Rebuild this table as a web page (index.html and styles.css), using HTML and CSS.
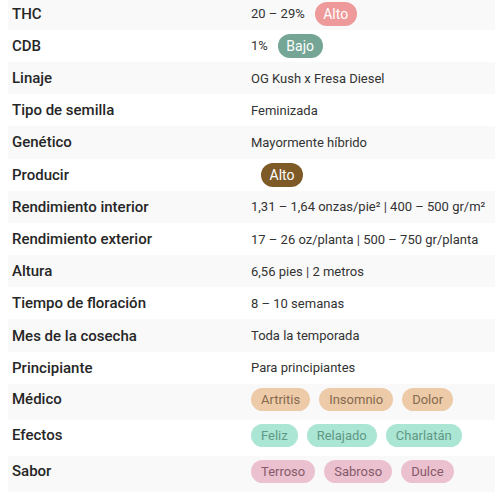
FILE: index.html
```html
<!DOCTYPE html>
<html lang="es">
<head>
<meta charset="utf-8">
<link rel="stylesheet" href="styles.css">
</head>
<body>
<div class="specs">
  <div class="row"><div class="label">THC</div><div class="value">20 – 29% <span class="badge pink">Alto</span></div></div>
  <div class="row"><div class="label">CDB</div><div class="value">1% <span class="badge green">Bajo</span></div></div>
  <div class="row"><div class="label">Linaje</div><div class="value">OG Kush x Fresa Diesel</div></div>
  <div class="row"><div class="label">Tipo de semilla</div><div class="value">Feminizada</div></div>
  <div class="row"><div class="label">Genético</div><div class="value">Mayormente híbrido</div></div>
  <div class="row"><div class="label">Producir</div><div class="value"><span class="badge brown solo">Alto</span></div></div>
  <div class="row"><div class="label">Rendimiento interior</div><div class="value">1,31 – 1,64 onzas/pie² | 400 – 500 gr/m²</div></div>
  <div class="row"><div class="label">Rendimiento exterior</div><div class="value">17 – 26 oz/planta | 500 – 750 gr/planta</div></div>
  <div class="row"><div class="label">Altura</div><div class="value">6,56 pies | 2 metros</div></div>
  <div class="row"><div class="label">Tiempo de floración</div><div class="value">8 – 10 semanas</div></div>
  <div class="row"><div class="label">Mes de la cosecha</div><div class="value">Toda la temporada</div></div>
  <div class="row"><div class="label">Principiante</div><div class="value">Para principiantes</div></div>
  <div class="row tags-row"><div class="label">Médico</div><div class="value tags"><span class="tag peach">Artritis</span><span class="tag peach">Insomnio</span><span class="tag peach">Dolor</span></div></div>
  <div class="row tags-row"><div class="label">Efectos</div><div class="value tags"><span class="tag mint">Feliz</span><span class="tag mint">Relajado</span><span class="tag mint">Charlatán</span></div></div>
  <div class="row tags-row"><div class="label">Sabor</div><div class="value tags"><span class="tag rose">Terroso</span><span class="tag rose">Sabroso</span><span class="tag rose">Dulce</span></div></div>
</div>
</body>
</html>
```
FILE: styles.css
```css
html, body {
  margin: 0;
  padding: 0;
  background: #ffffff;
}
body {
  padding-left: 8px;
  font-family: Roboto, "Liberation Sans", sans-serif;
  overflow: hidden;
}
.specs {
  margin-top: -2.4px;
  display: flex;
  flex-direction: column;
}
.row {
  display: grid;
  grid-template-columns: 239px 1fr;
  height: 32.2px;
  box-sizing: border-box;
  align-items: center;
}
.row:nth-child(odd) {
  background: #f9f9f9;
}
.label {
  padding-left: 4px;
  font-size: 15px;
  font-weight: 500;
  color: #262626;
}
.value {
  padding-left: 4px;
  font-size: 13px;
  color: #333333;
  display: flex;
  align-items: center;
  white-space: nowrap;
}
.badge {
  display: inline-block;
  height: 24px;
  line-height: 24px;
  padding: 0 8.5px;
  border-radius: 12px;
  font-size: 14px;
  color: #ffffff;
  margin-left: 10px;
}
.badge.solo {
  margin-left: 10px;
}
.pink { background: #ee9a9a; }
.green { background: #74a595; }
.brown { background: #7e5a27; }
.tags-row {
  height: 36px;
  align-items: start;
  padding-top: 4px;
}
.tags-row .label {
  line-height: 22px;
}
.tags {
  gap: 9px;
}
.tag {
  display: inline-block;
  height: 23px;
  line-height: 23px;
  padding: 0 10px;
  border-radius: 12px;
  font-size: 13px;
}
.peach { background: #edcba8; color: #86694f; }
.mint { background: #abe5d4; color: #5f9985; }
.rose { background: #ebc1d0; color: #865a6a; }
```
